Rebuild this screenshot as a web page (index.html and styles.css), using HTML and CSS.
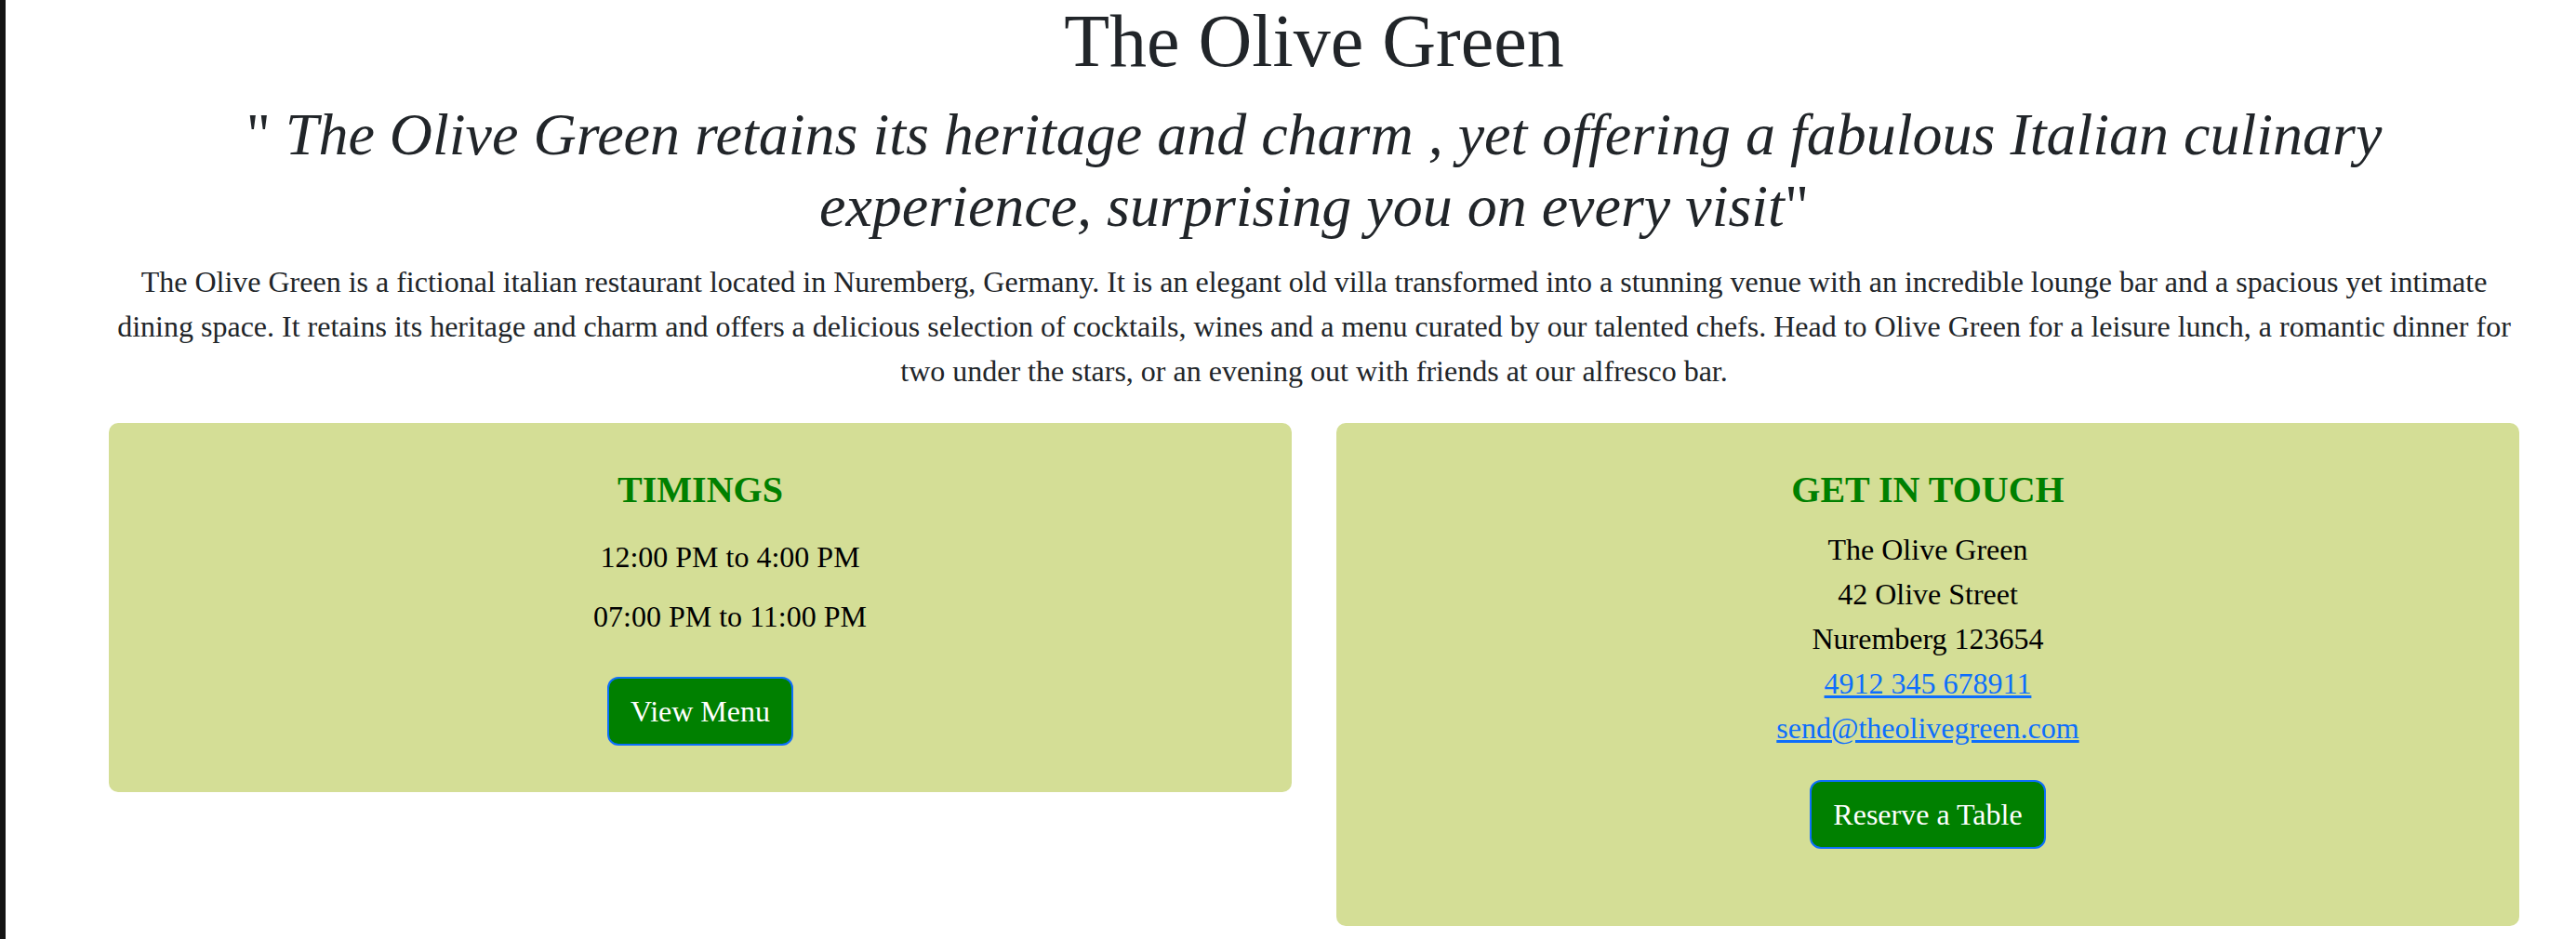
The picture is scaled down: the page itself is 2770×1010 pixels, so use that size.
FILE: index.html
```html
<!DOCTYPE html>
<html lang="en">
<head>
<meta charset="utf-8">
<title>The Olive Green</title>
<link rel="stylesheet" href="styles.css">
</head>
<body>
<main class="page">
  <header class="intro">
    <h1 class="title">The Olive Green</h1>
    <h2 class="tagline">" <em>The Olive Green retains its heritage and charm , yet offering a fabulous Italian culinary experience, surprising you on every visit</em>"</h2>
    <p class="about">The Olive Green is a fictional italian restaurant located in Nuremberg, Germany. It is an elegant old villa transformed into a stunning venue with an incredible lounge bar and a spacious yet intimate dining space. It retains its heritage and charm and offers a delicious selection of cocktails, wines and a menu curated by our talented chefs. Head to Olive Green for a leisure lunch, a romantic dinner for two under the stars, or an evening out with friends at our alfresco bar.</p>
  </header>
  <section class="cards">
    <div class="card card-timings">
      <h3 class="card-title title-timings">TIMINGS</h3>
      <ul class="times">
        <li class="time">12:00 PM to 4:00 PM</li>
        <li class="time time-last">07:00 PM to 11:00 PM</li>
      </ul>
      <a class="btn" href="#">View Menu</a>
    </div>
    <div class="card card-contact">
      <h3 class="card-title title-contact">GET IN TOUCH</h3>
      <address class="address">
        <span class="line">The Olive Green</span>
        <span class="line">42 Olive Street</span>
        <span class="line">Nuremberg 123654</span>
        <a class="line link" href="#">4912 345 678911</a>
        <a class="line link" href="#">send@theolivegreen.com</a>
      </address>
      <a class="btn btn-reserve" href="#">Reserve a Table</a>
    </div>
  </section>
</main>
</body>
</html>
```

FILE: styles.css
```css
html, body {
  margin: 0;
  padding: 0;
  background: #ffffff;
}

body {
  border-left: 6px solid #141414;
  font-family: "Liberation Serif", "Times New Roman", serif;
  color: #212529;
  min-height: 1010px;
  box-sizing: border-box;
}

.page {
  padding: 0 61px 0 111px;
}

.intro {
  text-align: center;
}

.title {
  margin: 0 0 19px;
  font-size: 80px;
  font-weight: normal;
  line-height: 88px;
}

.tagline {
  margin: 0 0 18px;
  font-size: 64px;
  font-weight: normal;
  line-height: 1.2;
}

.tagline em {
  font-style: italic;
}

.about {
  margin: 0 0 32px;
  font-size: 32px;
  line-height: 48px;
}

.cards {
  display: grid;
  grid-template-columns: 1fr 1fr;
  column-gap: 48px;
  align-items: start;
}

.card {
  background: #d4de96;
  border-radius: 10px;
  padding: 48px 24px 50px;
  display: flex;
  flex-direction: column;
  align-items: center;
  text-align: center;
  color: #000000;
  font-size: 32px;
  line-height: 48px;
}

.card-title {
  margin: 0;
  font-size: 40px;
  line-height: 48px;
  font-weight: bold;
  color: #008000;
}

.title-timings {
  margin-bottom: 24px;
}

.title-contact {
  margin-bottom: 16px;
}

.times {
  list-style: none;
  margin: 0 0 41px;
  padding: 0 0 0 64px;
}

.time {
  margin: 0 0 16px;
}

.time-last {
  margin-bottom: 0;
}

.address {
  font-style: normal;
  display: flex;
  flex-direction: column;
  align-items: center;
}

.line {
  display: block;
}

.link {
  color: #0d6efd;
  text-decoration: underline;
}

.btn {
  display: inline-block;
  background: #008000;
  color: #ffffff;
  text-decoration: none;
  border: 2px solid #0d6efd;
  border-radius: 12px;
  padding: 11px 23px;
  font-size: 32px;
  line-height: 48px;
}

.btn-reserve {
  margin: 32px 0 33px;
}
```
